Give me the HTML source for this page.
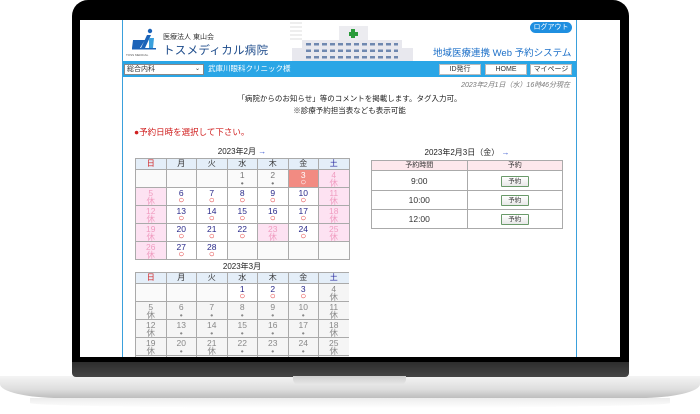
<!DOCTYPE html>
<html><head><meta charset="utf-8"><style>
*{margin:0;padding:0;box-sizing:border-box}
body{width:700px;height:414px;background:#fff;position:relative;overflow:hidden;font-family:"Liberation Sans","Noto Sans CJK JP",sans-serif}
.a{position:absolute}
table{border-collapse:collapse;table-layout:fixed;position:absolute}
.cal td{border:1px solid #aaa;text-align:center;font-size:8.5px;line-height:8px;vertical-align:top;padding-top:1px;width:30.5px}
.cal tr.h td{background:#e4eef8;height:11px;font-size:8px;line-height:9px;color:#333;padding-top:0}
.cal tr.r td{height:17.4px}
.n{color:#2a2a8a;background:#fff}
.n i{color:#e03030;font-style:normal;display:block;font-size:10px;line-height:8px;font-weight:bold}
.p{background:#fde2f2;color:#f09cc0}
.t{background:#f28b82;color:#fff}
.t i{font-style:normal;display:block;font-size:10px;line-height:8px}
.e{background:#fafafa}
.g{background:#f5f5f5;color:#888}
.rt td{border:1px solid #aaa;text-align:center;font-size:8.5px;color:#333}
.btn{display:inline-block;width:28px;height:11px;border:1px solid #6a9a6a;background:linear-gradient(#fff,#e8e8e8);font-size:6.5px;line-height:9px;border-radius:1px}
.nb{position:absolute;top:64px;height:11px;background:#fff;border:1px solid #bbb;font-size:7px;line-height:9px;text-align:center;color:#333}
</style></head><body>
<div class="a" style="left:0;top:376px;width:700px;height:22px;background:linear-gradient(#f4f4f4,#dedede 60%,#bdbdbd);border-radius:0 0 60px 60px/0 0 14px 14px"></div>
<div class="a" style="left:30px;top:398px;width:640px;height:10px;background:linear-gradient(#e0e0e0,#fff);border-radius:0 0 50% 50%;opacity:.6"></div>
<div class="a" style="left:72px;top:360px;width:557px;height:17px;background:linear-gradient(#2a2a2a,#454545);border-radius:0 0 4px 4px"></div>
<div class="a" style="left:293px;top:376px;width:113px;height:9px;background:linear-gradient(#cfcfcf,#e8e8e8);border-radius:0 0 6px 6px"></div>
<div class="a" style="left:72px;top:0;width:557px;height:362px;background:#000;border-radius:16px 16px 0 0"></div>
<div class="a" style="left:80px;top:20px;width:540px;height:337px;background:#fff;overflow:hidden">
 <div class="a" style="left:42px;top:0;width:1px;height:337px;background:#3aa0dc"></div>
 <div class="a" style="left:496px;top:0;width:1px;height:337px;background:#3aa0dc"></div>
 <svg class="a" style="left:50px;top:8px" width="28" height="26" viewBox="0 0 28 26"><circle cx="20" cy="3" r="2.2" fill="#1b63b8"/><path d="M3 12h12l-5 8H2z" fill="#1b63b8"/><path d="M17 7h4l-6 13h-4z" fill="#1b63b8"/><path d="M19 10h5l-1 10h-4z" fill="#3aa0dc"/><rect x="2" y="20" width="24" height="1.5" fill="#1b63b8"/></svg>
 <div class="a" style="left:46px;top:33px;font-size:3px;color:#555">TOSS MEDICAL</div>
 <div class="a" style="left:83px;top:12px;font-size:7px;color:#333">医療法人 東山会</div>
 <div class="a" style="left:83px;top:22px;font-size:11.5px;color:#1b4a8a;letter-spacing:.3px">トスメディカル病院</div>
 <div class="a" style="left:210px;top:-2px;width:12px;height:24px;background:repeating-linear-gradient(#eee 0 2px,#fff 2px 4px)"></div>
 <div class="a" style="left:259px;top:6px;width:29px;height:15px;background:#ececf0"></div>
 <div class="a" style="left:271px;top:9px;width:4px;height:9px;background:#2a9a3a"></div>
 <div class="a" style="left:268.5px;top:11.5px;width:9px;height:4px;background:#2a9a3a"></div>
 <div class="a" style="left:222px;top:20px;width:100px;height:21px;background:#e8e8ee"></div>
 <div class="a" style="left:212px;top:28px;width:10px;height:13px;background:#e8e8ee"></div>
 <div class="a" style="left:322px;top:28px;width:11px;height:13px;background:#e8e8ee"></div>
 <div class="a" style="left:226px;top:23px;width:92px;height:16px;background:repeating-linear-gradient(90deg,#6f88b0 0 5px,transparent 5px 8px);-webkit-mask:repeating-linear-gradient(#000 0 2.5px,transparent 2.5px 6.5px)"></div>
 <div class="a" style="left:450px;top:2px;width:42px;height:11px;background:#1f8fe0;border-radius:6px;color:#fff;font-size:7px;line-height:11px;text-align:center">ログアウト</div>
 <div class="a" style="left:353px;top:25px;font-size:9.5px;color:#1b6fc8">地域医療連携 Web 予約システム</div>
 <div class="a" style="left:43px;top:41px;width:453px;height:16px;background:#2aa6e6"></div>
 <div class="a" style="left:44px;top:44px;width:80px;height:11px;background:#fff;border:1px solid #888;font-size:7px;line-height:9px;padding-left:2px;color:#333">総合内科<span style="position:absolute;right:3px;font-size:6px">⌄</span></div>
 <div class="a" style="left:128px;top:44px;font-size:7.5px;color:#fff;line-height:10px">武庫川眼科クリニック様</div>
 <div class="nb" style="left:359px;top:44px;width:42px">ID発行</div>
 <div class="nb" style="left:405px;top:44px;width:42px">HOME</div>
 <div class="nb" style="left:450px;top:44px;width:42px">マイページ</div>
 <div class="a" style="left:350px;top:60px;width:140px;text-align:right;font-size:7px;color:#777;font-style:italic">2023年2月1日（水）16時46分現在</div>
 <div class="a" style="left:43px;top:73px;width:453px;text-align:center;font-size:7.5px;color:#222;line-height:12px">「病院からのお知らせ」等のコメントを掲載します。タグ入力可。<br>※診療予約担当表なども表示可能</div>
 <div class="a" style="left:54px;top:106px;font-size:8.5px;color:#d02020">●予約日時を選択して下さい。</div>
 <div class="a" style="left:55px;top:126px;width:214px;text-align:center;font-size:8px;color:#222">2023年2月 <span style="color:#3a5ad0">→</span></div>
</div>
<table class="cal" style="left:135px;top:158px;width:214px">
<tr class="h"><td style="color:#d02020">日</td><td>月</td><td>火</td><td>水</td><td>木</td><td>金</td><td style="color:#2a2aa0">土</td></tr>
<tr class="r"><td class="e"></td><td class="e"></td><td class="e"></td><td class="e" style="color:#777">1<br>•</td><td class="e" style="color:#777">2<br>•</td><td class="t">3<i>○</i></td><td class="p">4<br>休</td></tr>
<tr class="r"><td class="p">5<br>休</td><td class="n">6<i>○</i></td><td class="n">7<i>○</i></td><td class="n">8<i>○</i></td><td class="n">9<i>○</i></td><td class="n">10<i>○</i></td><td class="p">11<br>休</td></tr>
<tr class="r"><td class="p">12<br>休</td><td class="n">13<i>○</i></td><td class="n">14<i>○</i></td><td class="n">15<i>○</i></td><td class="n">16<i>○</i></td><td class="n">17<i>○</i></td><td class="p">18<br>休</td></tr>
<tr class="r"><td class="p">19<br>休</td><td class="n">20<i>○</i></td><td class="n">21<i>○</i></td><td class="n">22<i>○</i></td><td class="p">23<br>休</td><td class="n">24<i>○</i></td><td class="p">25<br>休</td></tr>
<tr class="r"><td class="p">26<br>休</td><td class="n">27<i>○</i></td><td class="n">28<i>○</i></td><td class="e"></td><td class="e"></td><td class="e"></td><td class="e"></td></tr>
</table>
<div class="a" style="left:135px;top:261px;width:214px;text-align:center;font-size:8px;color:#222">2023年3月</div>
<div class="a" style="left:135px;top:272px;width:214px;height:85px;overflow:hidden">
<table class="cal" style="left:0;top:0;width:214px">
<tr class="h"><td style="color:#d02020">日</td><td>月</td><td>火</td><td>水</td><td>木</td><td>金</td><td style="color:#2a2aa0">土</td></tr>
<tr class="r"><td class="e"></td><td class="e"></td><td class="e"></td><td class="n">1<i>○</i></td><td class="n">2<i>○</i></td><td class="n">3<i>○</i></td><td class="g">4<br>休</td></tr>
<tr class="r"><td class="g">5<br>休</td><td class="g">6<br>•</td><td class="g">7<br>•</td><td class="g">8<br>•</td><td class="g">9<br>•</td><td class="g">10<br>•</td><td class="g">11<br>休</td></tr>
<tr class="r"><td class="g">12<br>休</td><td class="g">13<br>•</td><td class="g">14<br>•</td><td class="g">15<br>•</td><td class="g">16<br>•</td><td class="g">17<br>•</td><td class="g">18<br>休</td></tr>
<tr class="r"><td class="g">19<br>休</td><td class="g">20<br>•</td><td class="g">21<br>休</td><td class="g">22<br>•</td><td class="g">23<br>•</td><td class="g">24<br>•</td><td class="g">25<br>休</td></tr>
<tr class="r"><td class="g">26</td><td class="g">27</td><td class="g">28</td><td class="g">29</td><td class="g">30</td><td class="g">31</td><td class="g"></td></tr>
</table></div>
<div class="a" style="left:371px;top:147px;width:192px;text-align:center;font-size:8px;color:#222">2023年2月3日（金） <span style="color:#3a5ad0">→</span></div>
<table class="rt" style="left:371px;top:160px;width:192px">
<tr style="height:10px;background:#fde8ec"><td style="font-size:7px;line-height:8px">予約時間</td><td style="font-size:7px;line-height:8px">予約</td></tr>
<tr style="height:20px"><td>9:00</td><td><span class="btn">予約</span></td></tr>
<tr style="height:19px"><td>10:00</td><td><span class="btn">予約</span></td></tr>
<tr style="height:19px"><td>12:00</td><td><span class="btn">予約</span></td></tr>
</table>
</body></html>
